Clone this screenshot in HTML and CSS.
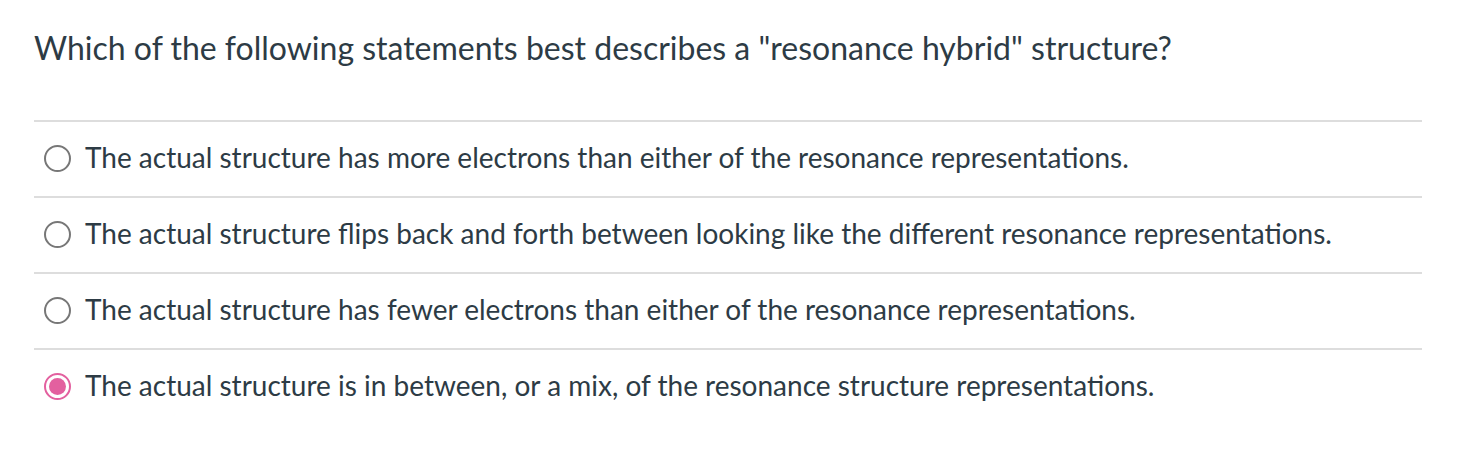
FILE: index.html
```html
<!DOCTYPE html>
<html>
<head>
<meta charset="utf-8">
<link rel="stylesheet" href="styles.css">
</head>
<body>
<div class="quiz">
  <div class="question">Which of the following statements best describes a "resonance hybrid" structure?</div>
  <div class="answers">
    <label class="answer"><span class="radio"></span><span class="text">The actual structure has more electrons than either of the resonance representations.</span></label>
    <label class="answer"><span class="radio"></span><span class="text">The actual structure flips back and forth between looking like the different resonance representations.</span></label>
    <label class="answer"><span class="radio"></span><span class="text">The actual structure has fewer electrons than either of the resonance representations.</span></label>
    <label class="answer"><span class="radio checked"></span><span class="text">The actual structure is in between, or a mix, of the resonance structure representations.</span></label>
  </div>
</div>
</body>
</html>
```
FILE: styles.css
```css
html, body {
  margin: 0;
  padding: 0;
  background: #ffffff;
}
body {
  font-family: Lato, "Open Sans", sans-serif;
  color: #2d3b45;
}
.quiz {
  padding: 26px 0 0 34px;
  width: 1388px;
}
.question {
  font-size: 32px;
  line-height: 44px;
  margin-bottom: 50px;
}
.answers {
  display: flex;
  flex-direction: column;
}
.answer {
  display: flex;
  align-items: center;
  height: 72px;
  padding-bottom: 2px;
  border-top: 2px solid #dddddd;
  gap: 14px;
  padding-left: 10px;
}
.radio {
  width: 23px;
  height: 23px;
  border: 2px solid #777777;
  border-radius: 50%;
  box-sizing: content-box;
  flex: none;
  position: relative;
}
.radio.checked {
  border-color: #e3609f;
}
.radio.checked::after {
  content: "";
  position: absolute;
  left: 3px;
  top: 3px;
  width: 17px;
  height: 17px;
  border-radius: 50%;
  background: #e3609f;
}
.text {
  font-size: 28px;
  line-height: 32px;
  padding-bottom: 2px;
}
```
